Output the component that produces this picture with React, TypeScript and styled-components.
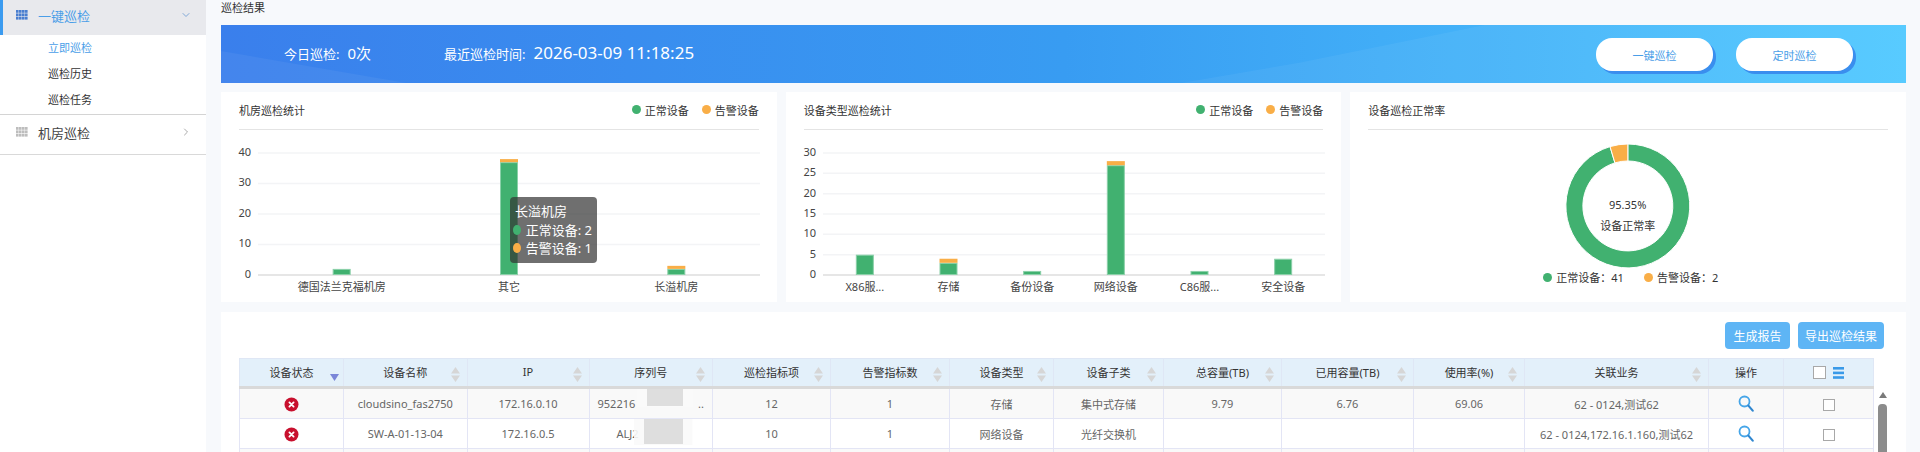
import React from 'react';
import styled, { createGlobalStyle } from 'styled-components';
import { ChevronDown, ChevronRight } from 'lucide-react';

const GREEN = '#41b170';
const ORANGE = '#f9ae47';

const GlobalStyle = createGlobalStyle`
  html, body {
    margin: 0;
    height: 452px;
    overflow: hidden;
    background: #f7f9fc;
    font-family: "Noto Sans", "Noto Sans CJK SC", "Liberation Sans", sans-serif;
    font-size: 11px;
    color: #333;
  }
`;

const Page = styled.div`
  display: flex;
  height: 452px;
  overflow: hidden;
`;

const Sidebar = styled.aside`
  width: 206px;
  flex: none;
  background: #fff;
`;

const MenuHead = styled.div<{ $active?: boolean }>`
  display: flex;
  align-items: center;
  gap: 10px;
  box-sizing: border-box;
  padding: 0 14px 5px ${(p) => (p.$active ? 13 : 16)}px;
  height: ${(p) => (p.$active ? 35 : 40)}px;
  background: ${(p) => (p.$active ? '#e8e9ed' : '#fff')};
  border-left: ${(p) => (p.$active ? '3px solid #3b9bf0' : 'none')};
  border-bottom: ${(p) => (p.$active ? 'none' : '1px solid #d9d9d9')};
  color: ${(p) => (p.$active ? '#4a9ee8' : '#444')};
  font-size: 13px;
`;

const MenuLabel = styled.span`
  flex: 1;
`;

const SubList = styled.div`
  padding-bottom: 1px;
  border-bottom: 1px solid #d4d4d4;
`;

const SubItem = styled.div<{ $active?: boolean }>`
  height: 26px;
  line-height: 26px;
  padding-left: 48px;
  color: ${(p) => (p.$active ? '#4a9ee8' : '#333')};
`;

const Main = styled.main`
  flex: 1;
  min-width: 0;
  padding: 0 14px 0 15px;
`;

const Crumb = styled.div`
  height: 25px;
  padding-top: 1px;
  line-height: 14px;
  box-sizing: border-box;
`;

const Banner = styled.section`
  position: relative;
  display: flex;
  align-items: center;
  height: 58px;
  padding: 0 53px 4px 63px;
  box-sizing: border-box;
  overflow: hidden;
  background: linear-gradient(90deg, #3a7fec 0%, #389cf2 50%, #50c9ff 100%);
  color: #fff;
  font-size: 13px;

  &::before,
  &::after {
    content: '';
    position: absolute;
    inset: 0;
    background: rgba(255, 255, 255, 0.05);
  }

  &::before {
    clip-path: polygon(0 45%, 11% 100%, 0 100%);
  }

  &::after {
    clip-path: polygon(57% 100%, 64% 65%, 75% 0, 100% 0, 100% 100%);
  }
`;

const BannerStat = styled.div<{ $width: number }>`
  position: relative;
  z-index: 1;
  flex: none;
  width: ${(p) => p.$width}px;
  display: flex;
  align-items: baseline;
  gap: 8px;
`;

const BigValue = styled.span<{ $size: number }>`
  font-size: ${(p) => p.$size}px;
`;

const BannerActions = styled.div`
  position: relative;
  z-index: 1;
  margin-left: auto;
  display: flex;
  gap: 23px;
  margin-top: 5px;
`;

const PillButton = styled.button`
  width: 117px;
  height: 33px;
  border: 0;
  border-radius: 16px;
  background: #fff;
  color: #4a9ee8;
  font: inherit;
  font-size: 11px;
  box-shadow: 3px 3px 0 #3a8eee;
`;

const CardGrid = styled.div`
  display: grid;
  grid-template-columns: repeat(3, 1fr);
  gap: 9px;
  margin-top: 9px;
`;

const Card = styled.section`
  position: relative;
  height: 210px;
  background: #fff;
`;

const CardHead = styled.header`
  display: flex;
  align-items: center;
  justify-content: space-between;
  height: 35px;
  padding-bottom: 2px;
  margin: 0 18px;
  border-bottom: 1px solid #e4e4e4;
`;

const Legend = styled.div`
  display: flex;
  gap: 13px;
`;

const LegendItem = styled.span`
  display: flex;
  align-items: center;
  gap: 4px;
  white-space: nowrap;
`;

const Dot = styled.i<{ $color: string; $size?: number }>`
  display: block;
  width: ${(p) => p.$size ?? 9}px;
  height: ${(p) => p.$size ?? 9}px;
  border-radius: 50%;
  background: ${(p) => p.$color};
`;

const ChartSvg = styled.svg`
  display: block;
  width: 100%;
  height: 172px;
  font-size: 11px;
  fill: #444;
`;

const Tooltip = styled.div`
  position: absolute;
  left: 289px;
  top: 105px;
  width: 87px;
  height: 66px;
  box-sizing: border-box;
  padding: 5px 5px;
  border-radius: 4px;
  background: rgba(50, 50, 50, 0.7);
  color: #fff;
  font-size: 13px;
  line-height: 18.5px;
  white-space: nowrap;
`;

const TipRow = styled.div`
  display: flex;
  align-items: center;
  gap: 5px;
  margin-left: -2px;
`;

const DonutWrap = styled.div`
  position: relative;
  height: 172px;
`;

const DonutSvg = styled.svg`
  display: block;
  position: absolute;
  left: 0;
  top: 0;
  width: 100%;
  height: 100%;
`;

const DonutText = styled.div`
  position: absolute;
  left: 0;
  right: 0;
  top: 64px;
  text-align: center;
  line-height: 21px;
  padding-right: 1px;
`;

const DonutLegend = styled.div`
  position: absolute;
  left: 193px;
  top: 139px;
  display: flex;
  gap: 20px;
`;

const TableCard = styled.section`
  margin-top: 10px;
  padding: 10px 22px 0 18px;
  background: #fff;
  height: 200px;
`;

const Toolbar = styled.div`
  display: flex;
  justify-content: flex-end;
  gap: 8px;
  margin-bottom: 9px;
`;

const ToolButton = styled.button<{ $width: number }>`
  width: ${(p) => p.$width}px;
  height: 27px;
  padding: 0;
  border: 0;
  border-radius: 4px;
  background: #5eb5f5;
  color: #fff;
  font: inherit;
  font-size: 12px;
`;

const TableRow = styled.div`
  display: flex;
  gap: 4px;
`;

const Table = styled.table`
  width: 1634px;
  flex: none;
  table-layout: fixed;
  border-collapse: collapse;
  align-self: flex-start;
`;

const Th = styled.th`
  position: relative;
  height: 25px;
  padding: 0 0 2px;
  background: #e3f0fa;
  border: 1px solid #dfe7f5;
  border-bottom: 3px solid #d9d9d9;
  font-weight: 400;
  color: #333;
`;

const Td = styled.td`
  position: relative;
  height: 29px;
  padding: 0;
  border: 1px solid #e3e5f5;
  text-align: center;
  color: #666;
  white-space: nowrap;
`;

const Tr = styled.tr<{ $striped?: boolean }>`
  background: ${(p) => (p.$striped ? '#f9f9f9' : '#fff')};
`;

const SortIcon = styled.svg`
  position: absolute;
  right: 7px;
  top: 8px;
  width: 9px;
  height: 15px;
  fill: #d6d6d6;
`;

const SortDown = styled.svg`
  position: absolute;
  right: 4px;
  top: 15px;
  width: 9px;
  height: 7px;
  fill: #7a86d8;
`;

const Blur = styled.span<{ $left: number; $width: number; $height: number }>`
  position: absolute;
  top: 0;
  left: ${(p) => p.$left}px;
  width: ${(p) => p.$width}px;
  height: ${(p) => p.$height}px;
  background: #dedede;
  box-shadow: 0 0 0 10px rgba(250, 250, 250, 0.9);
  clip-path: inset(0 -10px -1px -10px);
`;

const SerialCell = styled.span<{ $pad: number }>`
  display: flex;
  justify-content: space-between;
  padding: 0 8px 0 ${(p) => p.$pad}px;
`;

const Check = styled.span<{ $size: number }>`
  display: inline-block;
  width: ${(p) => p.$size}px;
  height: ${(p) => p.$size}px;
  box-sizing: border-box;
  border: 1px solid #a8a8a8;
  background: #fff;
  vertical-align: middle;
`;

const HeadTools = styled.span`
  display: inline-flex;
  align-items: center;
  gap: 7px;
  vertical-align: middle;
`;

const ScrollTrack = styled.div`
  position: relative;
  width: 9px;
  flex: none;
  margin-top: 34px;
`;

const ScrollArrow = styled.div`
  width: 0;
  height: 0;
  margin: 0 auto 6px;
  border-left: 4.5px solid transparent;
  border-right: 4.5px solid transparent;
  border-bottom: 6px solid #7a7a7a;
`;

const ScrollThumb = styled.div`
  width: 9px;
  height: 100px;
  border-radius: 4px;
  background: #8c8c8c;
`;

type Stack = { label: string; ok: number; warn: number };

const GridIcon = ({ color }: { color: string }) => (
  <svg width="12" height="10" viewBox="0 0 12 10" fill={color}>
    {[0, 1, 2].flatMap((r) =>
      [0, 1, 2, 3].map((c) => <rect key={`${r}${c}`} x={c * 3} y={r * 3.4} width="2.6" height="2.8" />)
    )}
  </svg>
);

const BarChart = ({ data, max, step }: { data: Stack[]; max: number; step: number }) => {
  const x0 = 37;
  const x1 = 539;
  const top = 23;
  const bottom = 145;
  const unit = (bottom - top) / max;
  const band = (x1 - x0) / data.length;
  const ticks: number[] = [];
  for (let v = 0; v <= max; v += step) ticks.push(v);

  return (
    <ChartSvg viewBox="0 0 555 172" preserveAspectRatio="xMinYMin meet">
      {ticks.map((v) => (
        <g key={v}>
          <line
            x1={x0}
            x2={x1}
            y1={bottom - v * unit}
            y2={bottom - v * unit}
            stroke={v === 0 ? '#e6e6e6' : '#f3f4f6'}
            strokeWidth={v === 0 ? 2 : 1.5}
          />
          <text x={30} y={bottom - v * unit} textAnchor="end" dominantBaseline="middle">
            {v}
          </text>
        </g>
      ))}
      {data.map((d, i) => {
        const cx = x0 + band * (i + 0.5);
        const okTop = bottom - d.ok * unit;
        return (
          <g key={d.label}>
            <rect x={cx - 8.5} y={okTop + 0.5} width={17} height={d.ok * unit - 1} fill={GREEN} stroke="#8ad0a8" />
            {d.warn > 0 && <rect x={cx - 9} y={okTop - d.warn * unit} width={18} height={d.warn * unit} fill={ORANGE} />}
            <text x={cx} y={158} textAnchor="middle" dominantBaseline="middle">
              {d.label}
            </text>
          </g>
        );
      })}
    </ChartSvg>
  );
};

const polar = (deg: number, r: number) => {
  const a = ((deg - 90) * Math.PI) / 180;
  return `${278 + r * Math.cos(a)} ${76 + r * Math.sin(a)}`;
};

const sector = (from: number, to: number) => {
  const large = to - from > 180 ? 1 : 0;
  return `M${polar(from, 62)} A62 62 0 ${large} 1 ${polar(to, 62)} L${polar(to, 45)} A45 45 0 ${large} 0 ${polar(from, 45)} Z`;
};

const Donut = () => (
  <DonutWrap>
    <DonutSvg viewBox="0 0 556 172" preserveAspectRatio="xMinYMin meet">
      <path d={sector(0, 343.3)} fill={GREEN} stroke="#fff" strokeWidth="1" />
      <path d={sector(343.3, 360)} fill={ORANGE} stroke="#fff" strokeWidth="1" />
    </DonutSvg>
    <DonutText>
      95.35%
      <br />
      设备正常率
    </DonutText>
    <DonutLegend>
      <LegendItem>
        <Dot $color={GREEN} />
        正常设备：41
      </LegendItem>
      <LegendItem>
        <Dot $color={ORANGE} />
        告警设备：2
      </LegendItem>
    </DonutLegend>
  </DonutWrap>
);

const StatusIcon = () => (
  <svg width="15" height="15" viewBox="0 0 15 15" style={{ verticalAlign: 'middle' }}>
    <circle cx="7.5" cy="7.5" r="7" fill="#c8102e" />
    <path d="M5.4 5.4l4.2 4.2M9.6 5.4l-4.2 4.2" stroke="#fff" strokeWidth="1.8" strokeLinecap="round" />
  </svg>
);

const SearchIcon = () => (
  <svg width="16" height="17" viewBox="0 0 16 17" fill="none" style={{ verticalAlign: 'middle' }}>
    <circle cx="6.5" cy="6.5" r="5" stroke="#45a5e8" strokeWidth="1.8" />
    <path d="M10.4 10.6l4.3 5" stroke="#2f86cf" strokeWidth="2.2" strokeLinecap="round" />
  </svg>
);

const MenuBars = () => (
  <svg width="11" height="12" viewBox="0 0 11 12" fill="#3a9ae8">
    <rect y="0" width="11" height="2.6" />
    <rect y="4.6" width="11" height="2.6" />
    <rect y="9.2" width="11" height="2.6" />
  </svg>
);

const Sort = () => (
  <SortIcon viewBox="0 0 9 15">
    <path d="M4.5 0L9 6.5H0zM0 8.5h9L4.5 15z" />
  </SortIcon>
);

const columns = [
  { title: '设备状态', width: 104 },
  { title: '设备名称', width: 123.5 },
  { title: 'IP', width: 122 },
  { title: '序列号', width: 123.5 },
  { title: '巡检指标项', width: 118 },
  { title: '告警指标数', width: 119 },
  { title: '设备类型', width: 104 },
  { title: '设备子类', width: 110 },
  { title: '总容量(TB)', width: 118 },
  { title: '已用容量(TB)', width: 132 },
  { title: '使用率(%)', width: 111 },
  { title: '关联业务', width: 184 },
  { title: '操作', width: 75 },
  { title: '', width: 90 },
];

const rows = [
  ['cloudsino_fas2750', '172.16.0.10', '', '12', '1', '存储', '集中式存储', '9.79', '6.76', '69.06', '62 - 0124,测试62'],
  ['SW-A-01-13-04', '172.16.0.5', '', '10', '1', '网络设备', '光纤交换机', '', '', '', '62 - 0124,172.16.1.160,测试62'],
];

const App = () => (
  <Page>
    <GlobalStyle />
    <Sidebar>
      <MenuHead $active>
        <GridIcon color="#4a7fd0" />
        <MenuLabel>一键巡检</MenuLabel>
        <ChevronDown size={12} color="#7fa8d8" />
      </MenuHead>
      <SubList>
        <SubItem $active>立即巡检</SubItem>
        <SubItem>巡检历史</SubItem>
        <SubItem>巡检任务</SubItem>
      </SubList>
      <MenuHead>
        <GridIcon color="#bdbdbd" />
        <MenuLabel>机房巡检</MenuLabel>
        <ChevronRight size={12} color="#aaa" />
      </MenuHead>
    </Sidebar>

    <Main>
      <Crumb>巡检结果</Crumb>
      <Banner>
        <BannerStat $width={160}>
          今日巡检:<BigValue $size={15}>0次</BigValue>
        </BannerStat>
        <BannerStat $width={300}>
          最近巡检时间:<BigValue $size={17}>2026-03-09 11:18:25</BigValue>
        </BannerStat>
        <BannerActions>
          <PillButton>一键巡检</PillButton>
          <PillButton>定时巡检</PillButton>
        </BannerActions>
      </Banner>

      <CardGrid>
        <Card>
          <CardHead>
            机房巡检统计
            <Legend>
              <LegendItem>
                <Dot $color={GREEN} />
                正常设备
              </LegendItem>
              <LegendItem>
                <Dot $color={ORANGE} />
                告警设备
              </LegendItem>
            </Legend>
          </CardHead>
          <BarChart
            max={40}
            step={10}
            data={[
              { label: '德国法兰克福机房', ok: 2, warn: 0 },
              { label: '其它', ok: 37, warn: 1 },
              { label: '长溢机房', ok: 2, warn: 1 },
            ]}
          />
          <Tooltip>
            长溢机房
            <TipRow>
              <Dot $color={GREEN} $size={10} />
              正常设备: 2
            </TipRow>
            <TipRow>
              <Dot $color={ORANGE} $size={10} />
              告警设备: 1
            </TipRow>
          </Tooltip>
        </Card>

        <Card>
          <CardHead>
            设备类型巡检统计
            <Legend>
              <LegendItem>
                <Dot $color={GREEN} />
                正常设备
              </LegendItem>
              <LegendItem>
                <Dot $color={ORANGE} />
                告警设备
              </LegendItem>
            </Legend>
          </CardHead>
          <BarChart
            max={30}
            step={5}
            data={[
              { label: 'X86服...', ok: 5, warn: 0 },
              { label: '存储', ok: 3, warn: 1 },
              { label: '备份设备', ok: 1, warn: 0 },
              { label: '网络设备', ok: 27, warn: 1 },
              { label: 'C86服...', ok: 1, warn: 0 },
              { label: '安全设备', ok: 4, warn: 0 },
            ]}
          />
        </Card>

        <Card>
          <CardHead>设备巡检正常率</CardHead>
          <Donut />
        </Card>
      </CardGrid>

      <TableCard>
        <Toolbar>
          <ToolButton $width={65}>生成报告</ToolButton>
          <ToolButton $width={86}>导出巡检结果</ToolButton>
        </Toolbar>
        <TableRow>
          <Table>
            <colgroup>
              {columns.map((c) => (
                <col key={c.title} width={c.width} />
              ))}
            </colgroup>
            <thead>
              <tr>
                {columns.map((c, i) => (
                  <Th key={c.title}>
                    {c.title}
                    {i === 0 && (
                      <SortDown viewBox="0 0 9 7">
                        <path d="M0 0h9L4.5 7z" />
                      </SortDown>
                    )}
                    {i > 0 && i < 12 && <Sort />}
                    {i === 13 && (
                      <HeadTools>
                        <Check $size={13} />
                        <MenuBars />
                      </HeadTools>
                    )}
                  </Th>
                ))}
              </tr>
            </thead>
            <tbody>
              {rows.map((row, r) => (
                <Tr key={row[0]} $striped={r === 0}>
                  <Td>
                    <StatusIcon />
                  </Td>
                  {row.map((cell, i) => (
                    <Td key={i}>
                      {i === 2 && r === 0 && (
                        <>
                          <SerialCell $pad={8}>
                            <span>952216</span>
                            <span>..</span>
                          </SerialCell>
                          <Blur $left={57} $width={36} $height={17} />
                        </>
                      )}
                      {i === 2 && r === 1 && (
                        <>
                          <SerialCell $pad={27}>
                            <span>ALJ2</span>
                          </SerialCell>
                          <Blur $left={54} $width={39} $height={25} />
                        </>
                      )}
                      {cell}
                    </Td>
                  ))}
                  <Td>
                    <SearchIcon />
                  </Td>
                  <Td>
                    <Check $size={12} />
                  </Td>
                </Tr>
              ))}
              <Tr $striped>
                {columns.map((c) => (
                  <Td key={c.title} />
                ))}
              </Tr>
            </tbody>
          </Table>
          <ScrollTrack>
            <ScrollArrow />
            <ScrollThumb />
          </ScrollTrack>
        </TableRow>
      </TableCard>
    </Main>
  </Page>
);

export default App;
